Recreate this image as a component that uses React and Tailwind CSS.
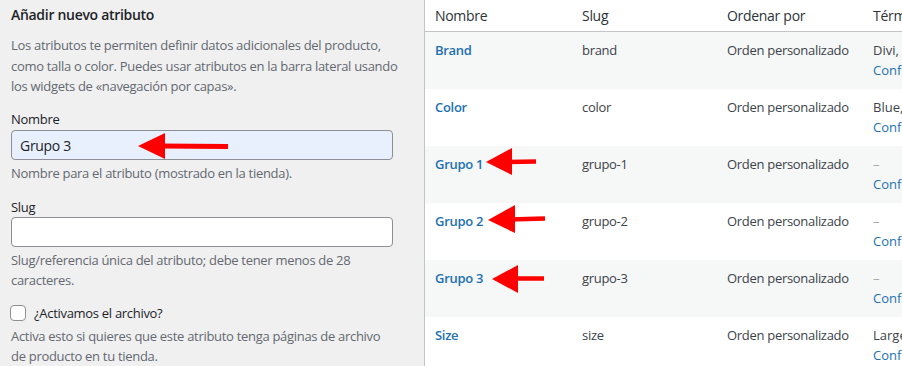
import React from 'react';

const rows = [
  { name: 'Brand', slug: 'brand', terms: 'Divi, Extra, Elegant' },
  { name: 'Color', slug: 'color', terms: 'Blue, Green, Red' },
  { name: 'Grupo 1', slug: 'grupo-1', terms: '–' },
  { name: 'Grupo 2', slug: 'grupo-2', terms: '–' },
  { name: 'Grupo 3', slug: 'grupo-3', terms: '–' },
  { name: 'Size', slug: 'size', terms: 'Large, Medium, Small' },
];

const cols = 'grid grid-cols-[147px_145px_146px_220px]';

const Arrows = () => (
  <svg className="absolute left-0 top-0 pointer-events-none" width="902" height="366" viewBox="0 0 902 366">
    <g fill="#ff0000" stroke="#ff0000" strokeLinecap="butt">
      <polygon points="138,146 165,133 165,159" stroke="none" />
      <line x1="160" y1="146" x2="228" y2="146.5" strokeWidth="5" />
      <polygon points="486,162 512,148 512,175" stroke="none" />
      <line x1="506" y1="162" x2="536" y2="161.5" strokeWidth="4.5" />
      <polygon points="488,220 515,205 515,233" stroke="none" />
      <line x1="509" y1="219.5" x2="545" y2="218.5" strokeWidth="4.5" />
      <polygon points="492,279 518,265 518,293" stroke="none" />
      <line x1="512" y1="278.5" x2="544" y2="278.5" strokeWidth="4.5" />
    </g>
  </svg>
);

const App = () => {
  return (
    <div className="relative flex h-[366px] w-[902px] overflow-hidden bg-[#f0f0f1] font-['Open_Sans',sans-serif] text-[13px] tracking-[-0.3px] text-[#3c434a]">
      <div className="w-[424px] shrink-0 px-[11px]">
        <h2 className="pt-[5px] text-[14px] font-semibold leading-[20px] text-[#1d2327]">Añadir nuevo atributo</h2>
        <p className="mt-[10px] leading-[20.5px] text-[#646970]">
          Los atributos te permiten definir datos adicionales del producto, como talla o color. Puedes usar atributos en la barra lateral usando los widgets de «navegación por capas».
        </p>

        <label className="mt-[13px] block leading-[19.5px] text-[#1d2327]">Nombre</label>
        <div className="mt-px flex h-[30px] w-[382px] items-center rounded-[4px] border border-[#8c8f94] bg-[#e8f0fe] px-[8px] text-[14px] text-[#1d2327]">
          Grupo 3
        </div>
        <p className="mt-[4px] leading-[19.5px] text-[#646970]">Nombre para el atributo (mostrado en la tienda).</p>

        <label className="mt-[14px] block leading-[19.5px] text-[#1d2327]">Slug</label>
        <div className="h-[30px] w-[382px] rounded-[4px] border border-[#8c8f94] bg-white" />
        <p className="mt-[4px] pr-[20px] leading-[19.5px] text-[#646970]">
          Slug/referencia única del atributo; debe tener menos de 28 caracteres.
        </p>

        <div className="mt-[13px] flex items-center gap-[8px] leading-[20px] text-[#1d2327]">
          <span className="ml-[-1px] h-[16px] w-[16px] rounded-[4px] border border-[#8c8f94] bg-white" />
          <span>¿Activamos el archivo?</span>
        </div>
        <p className="mt-[4px] pr-[20px] leading-[19.5px] text-[#646970]">
          Activa esto si quieres que este atributo tenga páginas de archivo de producto en tu tienda.
        </p>
      </div>

      <div className="flex-1 overflow-hidden border-l border-[#c3c4c7] bg-white">
        <div className={`${cols} h-[32px] items-center border-b border-[#c3c4c7] text-[14px] text-[#2c3338]`}>
          <div className="px-[10px]">Nombre</div>
          <div className="px-[10px]">Slug</div>
          <div className="px-[10px]">Ordenar por</div>
          <div className="px-[10px] whitespace-nowrap">Términos</div>
        </div>
        {rows.map((r, i) => (
          <div key={r.slug} className={`${cols} h-[57px] pt-[9px] leading-[19.5px] ${i % 2 === 0 ? 'bg-[#f6f7f7]' : 'bg-white'}`}>
            <div className="px-[10px] font-semibold text-[#2271b1]">{r.name}</div>
            <div className="px-[10px]">{r.slug}</div>
            <div className="px-[10px] whitespace-nowrap">Orden personalizado</div>
            <div className="px-[10px] whitespace-nowrap tracking-normal">
              <div className={r.terms === '–' ? 'text-[#a7aaad]' : ''}>{r.terms}</div>
              <div className="text-[#2271b1]">Configurar términos</div>
            </div>
          </div>
        ))}
      </div>

      <Arrows />
    </div>
  );
};

export default App;
